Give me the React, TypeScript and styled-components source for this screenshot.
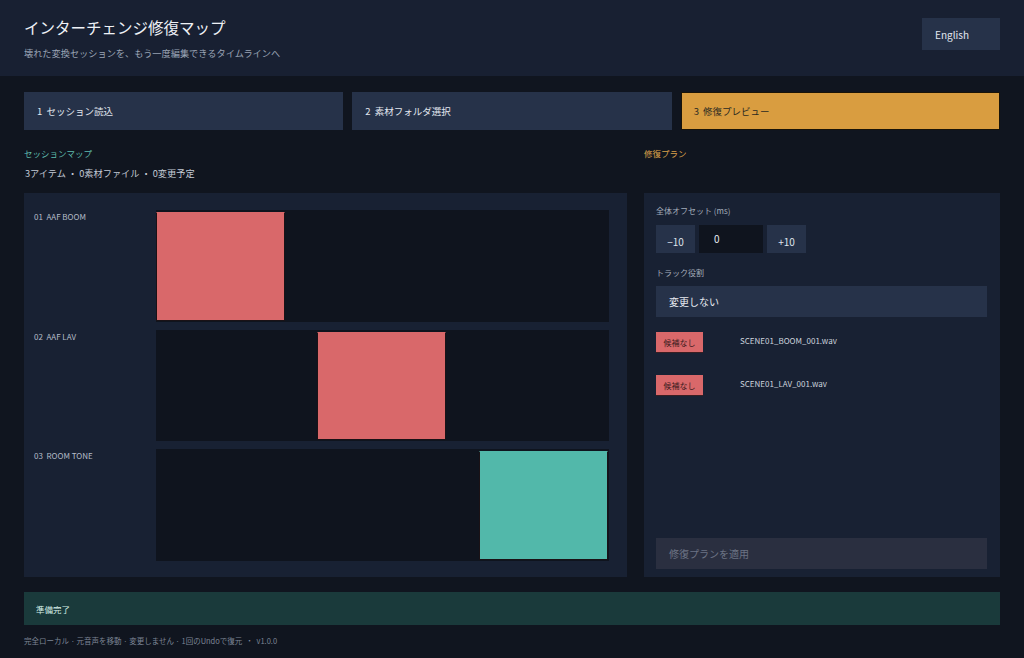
import styled, { createGlobalStyle } from "styled-components";

const Global = createGlobalStyle`
  html, body {
    margin: 0;
    padding: 0;
    background: #10151f;
  }
  body {
    font-family: "Noto Sans CJK JP", "Noto Sans", sans-serif;
    color: #d5dbe6;
  }
  * {
    box-sizing: border-box;
  }
`;

const Page = styled.div`
  width: 1024px;
  height: 658px;
  display: flex;
  flex-direction: column;
  background: #10151f;
  overflow: hidden;
`;

const Header = styled.header`
  height: 76px;
  background: #182032;
  display: flex;
  align-items: flex-start;
  justify-content: space-between;
  padding: 16px 24px 0 24px;
`;

const TitleBlock = styled.div`
  display: flex;
  flex-direction: column;
  gap: 8px;
`;

const Title = styled.h1`
  margin: 0;
  font-size: 15.5px;
  font-weight: 400;
  line-height: 22px;
  color: #eef1f6;
`;

const Subtitle = styled.p`
  margin: 0;
  font-size: 9.2px;
  line-height: 14px;
  color: #9aa4b5;
`;

const LangButton = styled.button`
  margin-top: 2px;
  width: 78px;
  height: 32px;
  background: #263249;
  border: none;
  color: #e2e7ef;
  font-family: inherit;
  font-size: 10px;
  text-align: left;
  padding: 0 13px;
`;

const Main = styled.main`
  flex: 1;
  display: flex;
  flex-direction: column;
  padding: 16px 24px 0 24px;
`;

const Steps = styled.div`
  display: grid;
  grid-template-columns: repeat(3, minmax(0, 1fr));
  gap: 9px;
`;

const Step = styled.div<{ $active?: boolean }>`
  height: 38px;
  display: flex;
  align-items: center;
  padding: 0 12px;
  font-size: 9.5px;
  word-spacing: 2px;
  background: ${({ $active }) => ($active ? "#d99d40" : "#263249")};
  color: ${({ $active }) => ($active ? "#2b2a22" : "#e2e7ef")};
  border: 1px solid ${({ $active }) => ($active ? "#1a1408" : "transparent")};
`;

const Columns = styled.div`
  display: grid;
  grid-template-columns: 603px 356px;
  gap: 17px;
  margin-top: 17px;
`;

const Column = styled.section`
  display: flex;
  flex-direction: column;
`;

const SectionLabel = styled.div<{ $color: string }>`
  font-size: 8.5px;
  line-height: 12px;
  height: 12px;
  color: ${({ $color }) => $color};
`;

const Summary = styled.div`
  font-size: 9.2px;
  line-height: 14px;
  color: #c4cbd6;
  margin: 7px 0 0 1px;
  height: 14px;
`;

const MapPanel = styled.div`
  margin-top: 13px;
  height: 384px;
  background: #182133;
  padding: 17px 18px 16px 10px;
  display: flex;
  flex-direction: column;
  gap: 8px;
`;

const TrackRow = styled.div`
  flex: 1;
  display: grid;
  grid-template-columns: 122px 1fr;
`;

const TrackName = styled.div`
  font-size: 8px;
  line-height: 12px;
  color: #b4bcc8;
  padding-top: 1px;
  white-space: pre;
`;

const Lane = styled.div`
  position: relative;
  background: #0f141e;
`;

const Clip = styled.div<{ $color: string }>`
  position: absolute;
  top: 2px;
  bottom: 1px;
  width: 28.5%;
  background: ${({ $color }) => $color};
  border: 1px solid #1a1216;
  border-top-color: ${({ $color }) => $color};
`;

const PlanPanel = styled.div`
  margin-top: 34px;
  height: 384px;
  background: #182133;
  padding: 12px 13px 8px 12px;
  display: flex;
  flex-direction: column;
`;

const FieldLabel = styled.div`
  font-size: 8px;
  line-height: 12px;
  color: #a3acba;
`;

const OffsetRow = styled.div`
  display: flex;
  gap: 4px;
  margin-top: 8px;
  height: 28px;
`;

const StepButton = styled.button`
  width: 39px;
  height: 28px;
  background: #263249;
  border: none;
  color: #dfe4ec;
  font-family: inherit;
  font-size: 10px;
  padding-top: 6px;
`;

const OffsetInput = styled.div`
  width: 64px;
  height: 28px;
  background: #0f141e;
  color: #e6eaf0;
  font-size: 10px;
  padding: 6px 0 0 15px;
`;

const RoleLabel = styled(FieldLabel)`
  margin-top: 14px;
`;

const Select = styled.div`
  margin-top: 7px;
  height: 31px;
  background: #263249;
  color: #e6eaf0;
  font-size: 10px;
  display: flex;
  align-items: center;
  padding: 0 13px;
`;

const CandidateList = styled.div`
  margin-top: 15px;
  display: flex;
  flex-direction: column;
  gap: 22px;
`;

const CandidateRow = styled.div`
  display: flex;
  align-items: flex-start;
`;

const Badge = styled.span`
  width: 47px;
  height: 21px;
  background: #d9686a;
  color: #3a1a1c;
  font-size: 8px;
  display: flex;
  align-items: center;
  justify-content: center;
  flex-shrink: 0;
  border-bottom: 1px solid #3a1e22;
`;

const FileName = styled.span`
  margin-left: 37px;
  font-size: 8px;
  line-height: 14px;
  color: #cdd4de;
  padding-top: 2px;
`;

const ApplyButton = styled.button`
  margin-top: auto;
  height: 31px;
  background: #2a2f40;
  border: none;
  color: #6c7384;
  font-family: inherit;
  font-size: 10px;
  text-align: left;
  padding: 0 13px;
`;

const StatusBar = styled.div`
  margin-top: 15px;
  height: 33px;
  background: #1a3a3b;
  color: #d6efe8;
  font-size: 8.5px;
  display: flex;
  align-items: center;
  padding: 0 12px;
`;

const Footer = styled.footer`
  margin-top: 10px;
  font-size: 7.5px;
  line-height: 12px;
  color: #7d8696;
  white-space: pre;
`;

const tracks = [
  { name: "01  AAF BOOM", left: 0, color: "#d9686a" },
  { name: "02  AAF LAV", left: 35.5, color: "#d9686a" },
  { name: "03  ROOM TONE", left: 71.3, color: "#52b8aa" },
];

const candidates = ["SCENE01_BOOM_001.wav", "SCENE01_LAV_001.wav"];

export default function App() {
  return (
    <Page>
      <Global />
      <Header>
        <TitleBlock>
          <Title>インターチェンジ修復マップ</Title>
          <Subtitle>壊れた変換セッションを、もう一度編集できるタイムラインへ</Subtitle>
        </TitleBlock>
        <LangButton>English</LangButton>
      </Header>
      <Main>
        <Steps>
          <Step>1 セッション読込</Step>
          <Step>2 素材フォルダ選択</Step>
          <Step $active>3 修復プレビュー</Step>
        </Steps>
        <Columns>
          <Column>
            <SectionLabel $color="#5fbcae">セッションマップ</SectionLabel>
            <Summary>3アイテム ・ 0素材ファイル ・ 0変更予定</Summary>
            <MapPanel>
              {tracks.map((t) => (
                <TrackRow key={t.name}>
                  <TrackName>{t.name}</TrackName>
                  <Lane>
                    <Clip $color={t.color} style={{ left: `${t.left}%` }} />
                  </Lane>
                </TrackRow>
              ))}
            </MapPanel>
          </Column>
          <Column>
            <SectionLabel $color="#d9a04a">修復プラン</SectionLabel>
            <PlanPanel>
              <FieldLabel>全体オフセット (ms)</FieldLabel>
              <OffsetRow>
                <StepButton>−10</StepButton>
                <OffsetInput>0</OffsetInput>
                <StepButton>+10</StepButton>
              </OffsetRow>
              <RoleLabel>トラック役割</RoleLabel>
              <Select>変更しない</Select>
              <CandidateList>
                {candidates.map((c) => (
                  <CandidateRow key={c}>
                    <Badge>候補なし</Badge>
                    <FileName>{c}</FileName>
                  </CandidateRow>
                ))}
              </CandidateList>
              <ApplyButton>修復プランを適用</ApplyButton>
            </PlanPanel>
          </Column>
        </Columns>
        <StatusBar>準備完了</StatusBar>
        <Footer>完全ローカル · 元音声を移動 · 変更しません · 1回のUndoで復元  ・  v1.0.0</Footer>
      </Main>
    </Page>
  );
}
